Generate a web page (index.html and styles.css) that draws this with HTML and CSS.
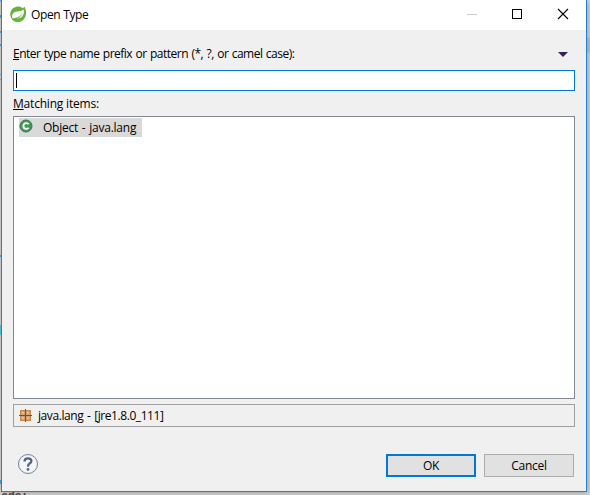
FILE: index.html
```html
<!DOCTYPE html>
<html lang="en">
<head>
<meta charset="utf-8">
<title>Open Type</title>
<link rel="stylesheet" href="styles.css">
</head>
<body>
<div class="desktop">
  <span class="backdrop-text">ede:</span>
  <span class="backdrop-marks"></span>
  <span class="backdrop-selection"></span>
  <main class="dialog">
    <header class="titlebar">
      <svg class="leaf" width="17" height="17" viewBox="0 0 17 17"><path d="M14.400.8C16.800 4.500 16.700 10.200 13.600 13.500 10.200 17 4.700 17 1.900 13.300-.8 9.500-.1 4.500 3.400 2 6.700-.4 10.500.1 12.600 2.200 13.400 1.900 14 1.500 14.400.8Z" fill="#68b13b"/><path d="M13.600 3.600C11.500 5.400 9.500 5.100 7 5.500 3 6.200 1.300 8.600 2.500 12.400 5.500 12.900 9.300 12.800 12 10.700 14 8.900 14.400 6.200 13.600 3.600Z" fill="#fff"/><path d="M2.400 12.700C7.500 12 10.800 10.300 12.900 6.600 11.500 10.400 8 13.500 2.900 14Z" fill="#68b13b"/></svg>
      <h1 class="title">Open Type</h1>
      <svg class="controls" width="104" height="12" viewBox="0 0 104 12" fill="none" shape-rendering="crispEdges"><path d="M0 6.500h10" stroke="#ccc"/><path d="M45.500 1.500h9v9h-9z" stroke="#000"/><path d="M91 1l10 10M101 1L91 11" stroke="#000" stroke-width="1.100" shape-rendering="auto"/></svg>
    </header>
    <section class="content">
      <div class="prompt"><label class="prompt-text" for="pattern"><u>E</u>nter type name prefix or pattern (*, ?, or camel case):</label>
        <svg width="10" height="5" viewBox="0 0 10 5"><path d="M0 0h10L5 5z" fill="#382050"/></svg></div>
      <div class="field" id="pattern"><span class="caret"></span></div>
      <div class="matching"><span><u>M</u>atching items:</span></div>
      <div class="list">
        <div class="item">
          <svg width="14" height="14" viewBox="0 0 14 14"><circle cx="7" cy="7" r="6" fill="#48975a" stroke="#2c7947"/><path d="M9.600 5.100Q8.600 4.100 7.200 4.100 4.400 4.100 4.400 7 4.400 9.900 7.200 9.900 8.600 9.900 9.600 8.900" fill="none" stroke="#fff" stroke-width="1.800"/></svg>
          <span class="item-text">Object - java.lang</span>
        </div>
      </div>
      <div class="status">
        <svg width="13" height="13" viewBox="0 0 13 13"><path d="M1 1h11v11H1z" fill="#c48a5c"/><path d="M2.500 2.500h3v3h-3zM7.500 2.500h3v3h-3zM2.500 7.500h3v3h-3zM7.500 7.500h3v3h-3z" fill="#e5bd88"/><path d="M6.500 0v13M0 6.500h13" stroke="#804a32"/></svg>
        <span class="status-text">java.lang - [jre1.8.0_111]</span>
      </div>
      <footer class="footer">
        <svg class="help" width="22" height="22" viewBox="0 0 22 22"><circle cx="11" cy="11" r="9.500" fill="#f4f5f7" stroke="#71809b"/><path d="M7.500 8.400Q7.500 5.300 11 5.300 14.400 5.300 14.400 8 14.400 9.500 12.600 10.600 11 11.600 11 13.700" fill="none" stroke="#536486" stroke-width="2.300"/><circle cx="11" cy="16.400" r="1.400" fill="#536486"/></svg>
        <button class="button primary">OK</button>
        <button class="button cancel">Cancel</button>
      </footer>
    </section>
  </main>
</div>
</body>
</html>
```
FILE: styles.css
```css
* { box-sizing: border-box; }
body { margin: 0; font: 12px/16px "Open Sans", "Noto Sans", sans-serif; color: #000; }
svg { display: block; flex: none; }
.desktop { position: relative; width: 590px; height: 495px; padding-left: 1px; overflow: hidden; background: #d5d5d6; }
.dialog { position: relative; width: 586px; height: 492px; border: 1px solid #1883d7; border-top: 0; background: #f0f0f0; box-shadow: 1px 1px 6px rgba(0,0,0,.25); }
.backdrop-text { position: absolute; left: 1px; top: 490px; font: bold 12px/14px "Liberation Mono", monospace; letter-spacing: -.5px; color: #63443d; }
.backdrop-marks { position: absolute; left: 0; top: 0; width: 1px; height: 495px; background: linear-gradient(#78b4e0 0 2px, transparent 2px 15px, #4ba3df 15px 18px, transparent 18px 31px, #4ba3df 31px 33px, transparent 33px 44px, #4ba3df 44px 46px, transparent 46px 74px, #78b4e0 74px 75px, transparent 75px 79px, #78b4e0 79px 80px, transparent 80px 255px, #4ba3df 255px 257px, transparent 257px 325px, #5fc4d8 325px 335px, transparent 335px 480px, #4ba3df 480px 484px, transparent 484px), #d5d5d6; }
.backdrop-selection { position: absolute; right: 0; top: 38px; width: 4px; height: 15px; background: #b9c6da; }
.titlebar { display: flex; align-items: center; height: 30px; padding: 0 15px 2px 8px; background: #fff; }
.title { margin: 0 0 0 4px; font-size: 12px; font-weight: 400; letter-spacing: -.35px; padding-top: 2px; }
.controls { margin-left: auto; }
.content { padding: 16px 11px 0; }
.prompt { display: flex; justify-content: space-between; align-items: center; height: 16px; padding-right: 7px; }
.prompt-text { letter-spacing: -.5px; word-spacing: .75px; white-space: nowrap; }
u { text-underline-offset: 1px; text-decoration-thickness: 1px; text-decoration-skip-ink: none; }
.field { height: 21px; margin-top: 8px; border: 1px solid #0078d7; background: #fff; padding: 2px; }
.caret { display: block; width: 1px; height: 15px; background: #000; }
.matching { height: 16px; margin-top: 5px; letter-spacing: -.2px; }
.list { height: 283px; margin-top: 4px; border: 1px solid #828790; background: #fff; padding: 1px 5px; }
.item { display: flex; width: 123px; height: 19px; background: #d9d9d9; }
.item svg { margin-top: 1px; }
.item-text { margin: 2px 0 0 10px; letter-spacing: -.25px; word-spacing: 1px; white-space: nowrap; }
.status { display: flex; align-items: center; height: 23px; margin-top: 5px; border: 1px solid #a0a0a0; padding-left: 5px; }
.status-text { margin-left: 6px; letter-spacing: -.42px; word-spacing: 1px; }
.footer { display: flex; align-items: center; height: 23px; margin-top: 27px; padding: 0 1px 0 4px; }
.help { margin-top: -4px; }
.button { width: 90px; height: 23px; padding: 0; border: 1px solid #adadad; background: #e1e1e1; font: inherit; letter-spacing: -.3px; color: #000; }
.primary { margin: 0 8px 0 auto; border: 2px solid #0078d7; }
```
